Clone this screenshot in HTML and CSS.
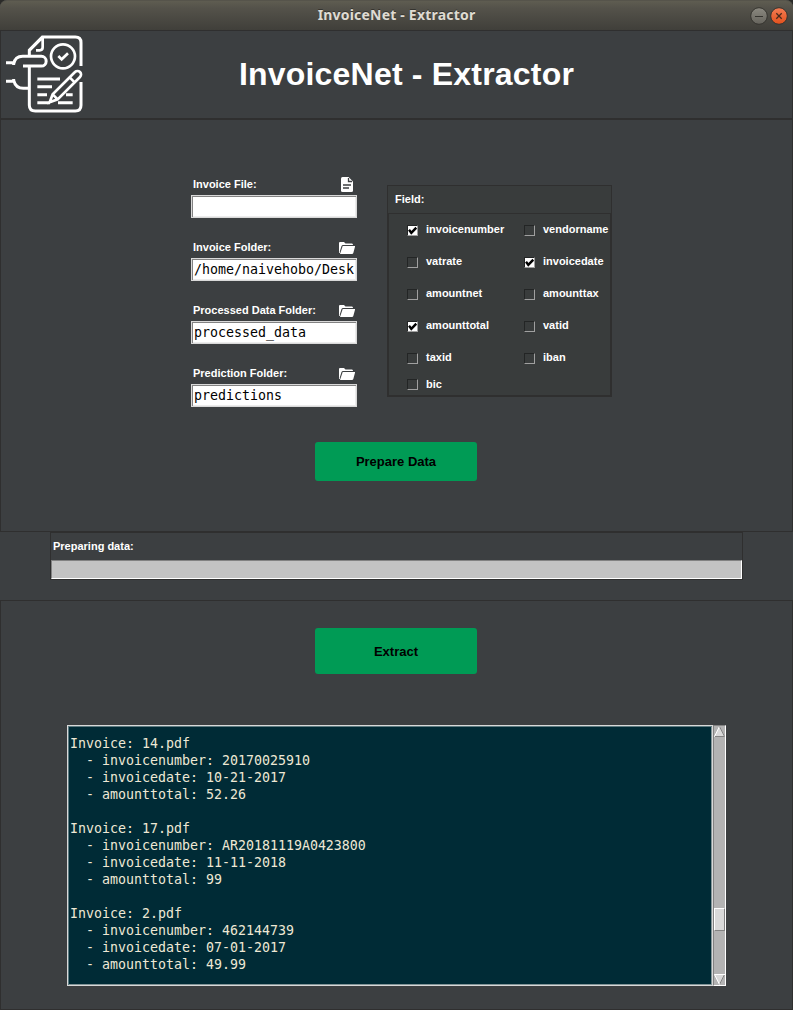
FILE: index.html
```html
<!DOCTYPE html>
<html lang="en">
<head>
<meta charset="utf-8">
<title>InvoiceNet - Extractor</title>
<link rel="stylesheet" href="styles.css">
</head>
<body>
<svg class="defs" width="0" height="0">
  <symbol id="folder" viewBox="0 0 16 12"><path fill="#fff" d="M0 11V1Q0 0 1 0H5L6.500 1.500H13Q14 1.500 14 3H4Q3 3 2.500 4L.8 9.500V11zM3.700 4H16.200L14.300 11Q14 12 13 12H1z"/></symbol>
  <symbol id="tick" viewBox="0 0 9 9"><path fill="none" stroke="#000" stroke-width="2.400" d="M1 3.800L3.300 6.800L8.300 1.700"/></symbol>
</svg>
<div class="titlebar">
  <span class="window-title">InvoiceNet - Extractor</span>
  <div class="controls">
    <svg class="control" viewBox="0 0 18 18"><defs><linearGradient id="g1" x2="0" y2="1"><stop stop-color="#8b8980"/><stop offset="1" stop-color="#66645d"/></linearGradient></defs><circle cx="9" cy="9" r="8.300" fill="url(#g1)" stroke="#35342f"/><path d="M5 9.500H13" stroke="#35342f"/></svg>
    <svg class="control" viewBox="0 0 18 18"><defs><linearGradient id="g2" x2="0" y2="1"><stop stop-color="#f47d54"/><stop offset="1" stop-color="#e2501c"/></linearGradient></defs><circle cx="9" cy="9" r="8.300" fill="url(#g2)" stroke="#35342f"/><path d="M6.300 6.300L11.700 11.700M11.700 6.300L6.300 11.700" stroke="#4a2a1c" stroke-width="1.300"/></svg>
  </div>
</div>
<header class="header panel">
  <svg class="logo" viewBox="15 102 240 240" fill="none" stroke="#fff" stroke-width="9">
    <path d="M88 167V150L127 111H226Q243 111 243 128V198M243 246V316Q243 333 226 333H106Q88 333 88 316V199"/>
    <path d="M128 111V142Q128 151 119 151H108M89 151L127 113" stroke-width="8"/>
    <path d="M18 188H42M41 195V192Q45 169 68 169H124A14 14 0 0 1 124 198H69M18 244H42M41 237V241Q47 265 70 265H88"/>
    <circle cx="189" cy="169" r="36" stroke-width="8"/>
    <path d="M175 168L185 178L204 160" stroke-width="8"/>
    <path d="M112 237H180M112 260H156M112 284H141M198 284H218M112 308H150M174 308H218"/>
    <path d="M149 307L158 283L225 216A10.500 10.500 0 0 1 240 231L173 298ZM209 232L224 247M158 283L173 298" stroke-width="8"/>
  </svg>
  <h1 class="heading">InvoiceNet - Extractor</h1>
</header>
<main>
  <section class="setup panel">
    <div class="setup-columns">
      <div class="paths">
        <div class="path"><div class="path-head"><label>Invoice File:</label><svg class="file-icon" viewBox="0 0 12 15"><path fill="#fff" d="M1.500 0H7.500L12 4.500V13.500Q12 15 10.500 15H1.500Q0 15 0 13.500V1.500Q0 0 1.500 0z"/><path d="M7.500 1V4.500H11M2 8H10M2 11H8" fill="none" stroke="#3c3f41" stroke-width="1.300"/></svg></div><div class="entry"></div></div>
        <div class="path"><div class="path-head"><label>Invoice Folder:</label><svg class="folder-icon"><use href="#folder"/></svg></div><div class="entry">/home/naivehobo/Desk</div></div>
        <div class="path"><div class="path-head"><label>Processed Data Folder:</label><svg class="folder-icon"><use href="#folder"/></svg></div><div class="entry">processed_data</div></div>
        <div class="path"><div class="path-head"><label>Prediction Folder:</label><svg class="folder-icon"><use href="#folder"/></svg></div><div class="entry">predictions</div></div>
      </div>
      <div class="fields">
        <div class="fields-title">Field:</div>
        <div class="fields-grid">
          <div class="field"><span class="box checked"><svg><use href="#tick"/></svg></span><span class="name">invoicenumber</span></div>
          <div class="field"><span class="box"></span><span class="name">vendorname</span></div>
          <div class="field"><span class="box"></span><span class="name">vatrate</span></div>
          <div class="field"><span class="box checked"><svg><use href="#tick"/></svg></span><span class="name">invoicedate</span></div>
          <div class="field"><span class="box"></span><span class="name">amountnet</span></div>
          <div class="field"><span class="box"></span><span class="name">amounttax</span></div>
          <div class="field"><span class="box checked"><svg><use href="#tick"/></svg></span><span class="name">amounttotal</span></div>
          <div class="field"><span class="box"></span><span class="name">vatid</span></div>
          <div class="field"><span class="box"></span><span class="name">taxid</span></div>
          <div class="field"><span class="box"></span><span class="name">iban</span></div>
          <div class="field"><span class="box"></span><span class="name">bic</span></div>
        </div>
      </div>
    </div>
    <button class="btn prepare">Prepare Data</button>
  </section>
  <section class="progress">
    <div class="progress-label">Preparing data:</div>
    <div class="progress-bar"></div>
  </section>
  <section class="extract-panel panel">
    <button class="btn extract">Extract</button>
    <div class="output">
<pre class="log">Invoice: 14.pdf
  - invoicenumber: 20170025910
  - invoicedate: 10-21-2017
  - amounttotal: 52.26

Invoice: 17.pdf
  - invoicenumber: AR20181119A0423800
  - invoicedate: 11-11-2018
  - amounttotal: 99

Invoice: 2.pdf
  - invoicenumber: 462144739
  - invoicedate: 07-01-2017
  - amounttotal: 49.99</pre>
      <div class="scrollbar">
        <svg class="arrow" viewBox="0 0 11 11"><path fill="#d9d9d9" d="M5.500 0L11 11H0z"/><path fill="none" stroke="#fff" d="M.5 10.500L5.500.5"/><path fill="none" stroke="#828282" d="M5.500.5L10.500 10.500H1"/></svg>
        <div class="thumb"></div>
        <svg class="arrow" viewBox="0 0 11 11"><path fill="#d9d9d9" d="M5.500 11L11 0H0z"/><path fill="none" stroke="#828282" d="M10.500.5L5.500 10.500"/><path fill="none" stroke="#fff" d="M5.500 10.500L.5.500H11"/></svg>
      </div>
    </div>
  </section>
</main>
</body>
</html>
```
FILE: styles.css
```css
* { box-sizing: border-box; }
body {
  margin: 0;
  width: 793px;
  height: 1010px;
  overflow: hidden;
  background: #3c3f41;
  color: #fff;
  font: bold 11px/14px "Liberation Sans", Arial, sans-serif;
}
.defs { display: none; }
.panel { border: 1px solid #2f2f2f; }
.titlebar {
  height: 30px;
  display: grid;
  grid-template-columns: 60px 1fr 60px;
  align-items: center;
  border-radius: 7px 7px 0 0;
  border-top: 1px solid #56544b;
  background: linear-gradient(#5f5d51, #54524a 25%, #403f3a);
  box-shadow: 0 -8px 0 8px #2b2b29;
}
.window-title {
  grid-column: 2;
  text-align: center;
  color: #dfdbd2;
  font: bold 14px/20px "Noto Sans", sans-serif;
  letter-spacing: .2px;
  padding-bottom: 2px;
  text-shadow: 0 -1px 0 #35342f;
}
.controls { display: flex; gap: 2px; padding-left: 17px; }
.control { width: 18px; height: 18px; }
.header {
  height: 89px;
  display: flex;
  align-items: center;
  background: #3c3f41;
}
.logo { width: 80px; height: 80px; margin: -2px 0 0 4px; }
.heading {
  margin: 0 114px 2px 0;
  flex: 1;
  text-align: center;
  font-size: 32px;
  line-height: 40px;
  letter-spacing: .2px;
  padding-left: 50px;
}
.setup { height: 413px; padding: 57px 0 0 190px; }
.setup-columns { display: flex; gap: 30px; height: 265px; }
.paths { width: 166px; display: flex; flex-direction: column; gap: 22px; }
.path { height: 41px; }
.path-head { height: 18px; display: flex; justify-content: space-between; padding: 0 2px; line-height: 14px; }
.file-icon { width: 12px; height: 15px; margin-right: 2px; }
.folder-icon { width: 16px; height: 12px; margin-top: 2px; }
.entry {
  height: 23px;
  background: #fff;
  color: #000;
  border: 1px solid #d9d9d9;
  box-shadow: inset 1px 1px 0 #828282, inset -1px -1px 0 #ececec;
  padding: 1px 0 0 2px;
  font: 13.290px/20px "DejaVu Sans Mono", monospace;
  white-space: pre;
  overflow: hidden;
}
.fields { width: 225px; height: 212px; margin-top: 8px; background: #393c3c; }
.fields-title { height: 28px; border: 1px solid #2f2f2f; border-bottom: 0; padding: 6px 7px; }
.fields-grid {
  height: 184px;
  border: 2px solid #2f2f2f;
  border-top-width: 1px;
  padding-left: 18px;
  display: grid;
  grid-template-columns: 117px 1fr;
  grid-template-rows: repeat(4, 32px) 28px 25px;
}
.field { display: flex; gap: 8px; padding-top: 11px; }
.field:nth-child(11) { padding-top: 9px; }
.field:nth-child(11) .name { margin-top: -2px; }
.box { width: 11px; height: 11px; flex: none; border: 1px solid; border-color: #232525 #a0a0a0 #a0a0a0 #232525; }
.checked { background: #fff; }
.box svg { display: block; width: 9px; height: 9px; }
.name { margin-top: -3px; }
.btn {
  display: block;
  width: 162px;
  border: 0;
  border-radius: 3px;
  background: #009b55;
  color: #000;
  font: bold 13px/16px "Liberation Sans", Arial, sans-serif;
}
.prepare { height: 39px; margin-left: 124px; }
.progress { width: 693px; height: 48px; margin: 0 50px 20px; border: 1px solid #2f2f2f; }
.progress-label { height: 27px; padding: 6px 2px; }
.progress-bar { height: 19px; background: #c3c3c3; border: 1px solid; border-color: #828282 #fff #fff #828282; }
.extract-panel { height: 410px; padding-top: 27px; }
.extract { height: 46px; margin-left: 314px; padding-top: 3px; }
.output { display: flex; height: 261px; margin: 51px 0 0 66px; }
.log {
  margin: 0;
  width: 646px;
  background: #002b36;
  color: #eee8d5;
  border: 1px solid #d9d9d9;
  box-shadow: inset 1px 1px 0 #5c7a80, inset -1px -1px 0 #819396;
  padding: 9px 2px;
  font: 13.290px/17px "DejaVu Sans Mono", monospace;
}
.scrollbar {
  width: 13px;
  display: flex;
  flex-direction: column;
  border: 1px solid;
  border-color: #828282 #fff #fff #828282;
  background: #b3b3b3;
}
.arrow { width: 11px; height: 11px; }
.thumb { height: 23px; margin: 171px 0 43px; background: #d9d9d9; border: 1px solid; border-color: #fff #828282 #828282 #fff; }
```
